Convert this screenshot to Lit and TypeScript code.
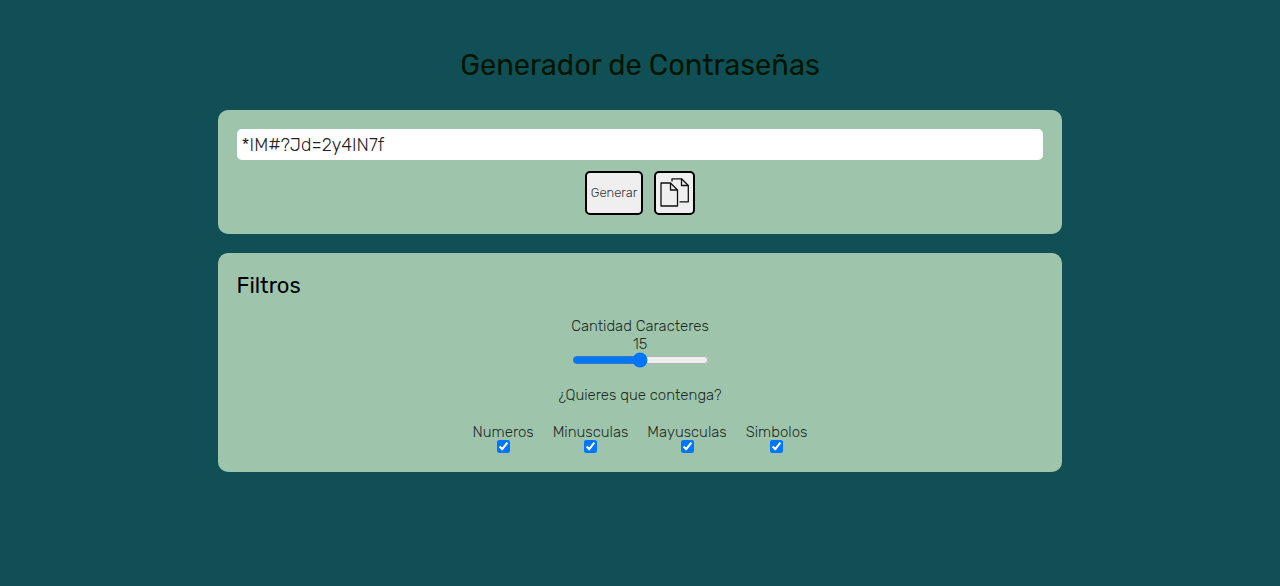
import { LitElement, html, css } from "lit";
import { customElement, state } from "lit/decorators.js";

@customElement("app-root")
export class AppRoot extends LitElement {
  static styles = css`
    :host {
      display: block;
      box-sizing: border-box;
      min-height: 100vh;
      padding: 44px 17% 40px;
      background: #104f55;
      color: #1d2b26;
      font: 300 16px/18px Rubik, Inter, sans-serif;
    }
    h1, h2, p { margin: 0; }
    .title {
      color: #011502;
      font-size: 29px;
      font-weight: 400;
      line-height: 42px;
      text-align: center;
      margin-bottom: 24px;
    }
    .card {
      background: #9ec5ab;
      border-radius: 10px;
      padding: 19px;
      margin-bottom: 19px;
    }
    .password {
      display: block;
      box-sizing: border-box;
      width: 100%;
      height: 31px;
      border: 0;
      border-radius: 5px;
      padding: 0 5px;
      background: #fff;
      color: #222;
      font: inherit;
      font-size: 18px;
    }
    .actions {
      display: flex;
      justify-content: center;
      gap: 11px;
      margin-top: 11px;
    }
    .action {
      display: flex;
      align-items: center;
      justify-content: center;
      box-sizing: border-box;
      height: 44px;
      border: 2px solid #000;
      border-radius: 5px;
      padding: 0 4px;
      background: #efefef;
      color: #333;
      font: inherit;
      font-size: 13px;
    }
    .icon { display: block; width: 29px; height: 32px; }
    .subtitle {
      color: #000;
      font-size: 22px;
      font-weight: 400;
      line-height: 28px;
      margin-bottom: 17px;
    }
    .filters {
      display: flex;
      flex-direction: column;
      align-items: center;
      font-size: 15px;
    }
    .length {
      display: flex;
      flex-direction: column;
      align-items: center;
    }
    .range {
      width: 137px;
      height: 14px;
      margin: 0;
      accent-color: #0075ff;
    }
    .question { margin: 19px 0 20px; }
    .options {
      display: flex;
      flex-wrap: wrap;
      justify-content: center;
      gap: 19px;
    }
    .option {
      display: flex;
      flex-direction: column;
      align-items: center;
      line-height: 16px;
    }
    .check {
      width: 13px;
      height: 13px;
      margin: 0;
      accent-color: #0075ff;
    }
  `;

  @state() private amount = 15;
  @state() private password = "*IM#?Jd=2y4IN7f";
  @state() private active: Record<string, boolean> = {
    Numeros: true, Minusculas: true, Mayusculas: true, Simbolos: true,
  };

  private sets: Record<string, string> = {
    Numeros: "0123456789",
    Minusculas: "abcdefghijklmnopqrstuvwxyz",
    Mayusculas: "ABCDEFGHIJKLMNOPQRSTUVWXYZ",
    Simbolos: "!#$%&*+-=?@",
  };

  private generate() {
    const pool = Object.keys(this.sets).filter((k) => this.active[k]).map((k) => this.sets[k]).join("");
    this.password = Array.from({ length: pool ? this.amount : 0 }, () => pool[Math.floor(Math.random() * pool.length)]).join("");
  }

  render() {
    return html`
      <main>
        <h1 class="title">Generador de Contraseñas</h1>
        <section class="card">
          <input class="password" type="text" readonly aria-label="Contraseña" .value=${this.password} />
          <div class="actions">
            <button class="action" type="button" @click=${this.generate}>Generar</button>
            <button class="action" type="button" aria-label="Copiar" @click=${() => navigator.clipboard?.writeText(this.password)}>
              <svg class="icon" viewBox="0 0 29 32" fill="none" stroke="#111" stroke-width="1.3" stroke-linejoin="round" aria-hidden="true">
                <path d="M1 6H10.5L17.5 13V29H1Z" />
                <path d="M10.5 6V13H17.5" />
                <path d="M12 4.5V1.8H21.5L28.3 8.5V24.8H19.5" />
                <path d="M21.5 1.8V8.5H28.3" />
              </svg>
            </button>
          </div>
        </section>
        <section class="card">
          <h2 class="subtitle">Filtros</h2>
          <div class="filters">
            <div class="length">
              <label for="amount">Cantidad Caracteres</label>
              <output for="amount">${this.amount}</output>
              <input class="range" id="amount" type="range" min="5" max="25" .value=${String(this.amount)}
                @input=${(e: Event) => (this.amount = Number((e.target as HTMLInputElement).value))} />
            </div>
            <p class="question">¿Quieres que contenga?</p>
            <div class="options">
              ${Object.keys(this.sets).map((name) => html`
                <label class="option">${name}
                  <input class="check" type="checkbox" .checked=${this.active[name]}
                    @change=${(e: Event) => (this.active = { ...this.active, [name]: (e.target as HTMLInputElement).checked })} />
                </label>`)}
            </div>
          </div>
        </section>
      </main>
    `;
  }
}
